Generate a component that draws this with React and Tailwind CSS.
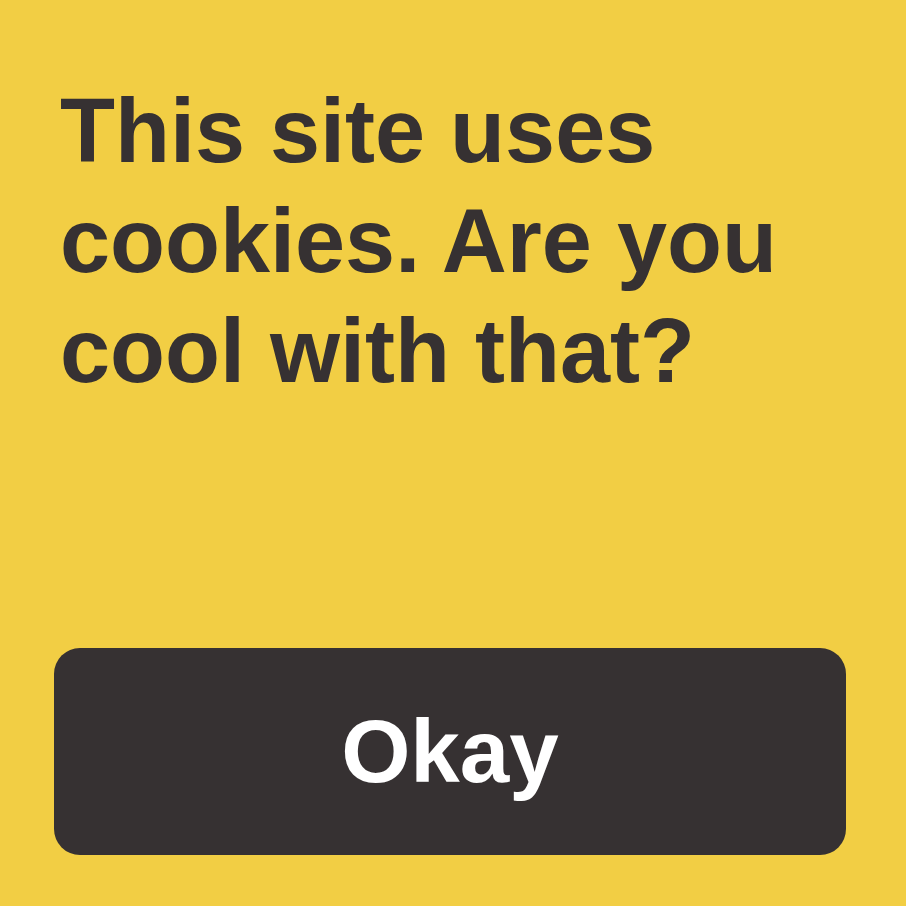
export default function App() {
  return (
    <div
      className="flex h-[906px] w-[906px] flex-col bg-[#f2ce44] pt-[76px]"
      style={{ fontFamily: '"Liberation Sans", Arial, sans-serif' }}
    >
      <p className="px-[60px] text-[90px] font-bold leading-[110px] text-[#363132]">
        This site uses cookies. Are you cool with that?
      </p>
      <button className="mb-[51px] ml-[54px] mt-auto flex h-[207px] w-[792px] items-center justify-center rounded-[26px] bg-[#363132] text-[89px] font-bold leading-none text-white">
        Okay
      </button>
    </div>
  );
}
